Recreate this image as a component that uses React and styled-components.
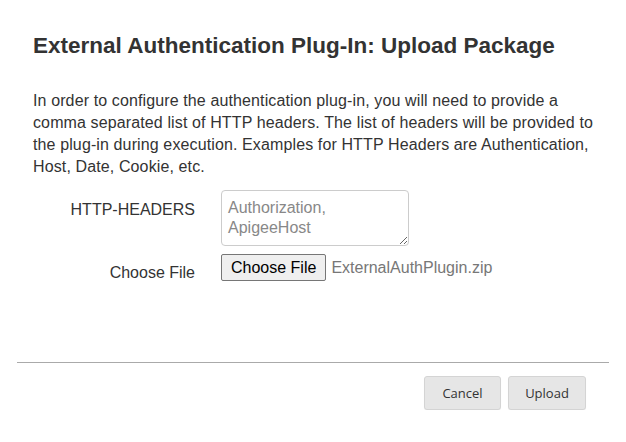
import React from "react";
import styled, { createGlobalStyle } from "styled-components";

const GlobalStyle = createGlobalStyle`
  body {
    margin: 0;
    background: #fff;
    font-family: "Liberation Sans", Arial, sans-serif;
    color: #333;
  }
`;

export default function App() {
  return (
    <>
      <GlobalStyle />
      <Modal>
        <Header>
          <Title>External Authentication Plug-In: Upload Package</Title>
        </Header>
        <Body>
          <Intro>
            In order to configure the authentication plug-in, you will need to
            provide a comma separated list of HTTP headers. The list of headers
            will be provided to the plug-in during execution. Examples for HTTP
            Headers are Authentication, Host, Date, Cookie, etc.
          </Intro>
          <Form>
            <Label htmlFor="headers">HTTP-HEADERS</Label>
            <TextArea id="headers" placeholder={"Authorization,\nApigeeHost"} />
            <Label $file>Choose File</Label>
            <FileField>
              <FileButton type="button">Choose File</FileButton>
              <FileName>ExternalAuthPlugin.zip</FileName>
            </FileField>
          </Form>
        </Body>
        <Footer>
          <ActionButton type="button">Cancel</ActionButton>
          <ActionButton type="button" $wide>Upload</ActionButton>
        </Footer>
      </Modal>
    </>
  );
}

const Modal = styled.div`
  width: 592px;
  padding: 0 17px;
`;

const Header = styled.div`
  padding: 32px 16px 0;
`;

const Title = styled.h2`
  margin: 0;
  font-size: 22.5px;
  font-weight: bold;
  line-height: 28px;
  color: #333;
`;

const Body = styled.div`
  padding: 0 6px 0 16px;
`;

const Intro = styled.p`
  margin: 30px 0 0;
  font-size: 16px;
  letter-spacing: 0.12px;
  line-height: 22px;
  color: #333;
`;

const Form = styled.div`
  display: grid;
  grid-template-columns: 162px 188px;
  column-gap: 26px;
  row-gap: 8px;
  margin-top: 12px;
  align-items: start;
`;

const Label = styled.label`
  text-align: right;
  font-size: 16px;
  color: #333;
  padding-top: ${(p) => (p.$file ? "10px" : "11px")};
`;

const TextArea = styled.textarea`
  box-sizing: border-box;
  width: 188px;
  height: 56px;
  padding: 7px 6px 4px;
  border: 1px solid #ccc;
  border-radius: 4px;
  font-family: "Liberation Sans", Arial, sans-serif;
  font-size: 16px;
  line-height: 20px;
  color: #333;
  resize: vertical;
  &::placeholder {
    color: #888;
  }
`;

const FileField = styled.div`
  display: flex;
  align-items: center;
  gap: 5px;
  white-space: nowrap;
`;

const FileButton = styled.button`
  box-sizing: border-box;
  height: 27px;
  padding: 0 9px;
  background: #efefef;
  border: 1px solid #767676;
  border-radius: 2px;
  font-family: "Liberation Sans", Arial, sans-serif;
  font-size: 16px;
  color: #000;
`;

const FileName = styled.span`
  font-size: 16px;
  color: #777;
`;

const Footer = styled.div`
  display: flex;
  justify-content: flex-end;
  gap: 7px;
  margin-top: 80px;
  padding: 13px 23px 0 0;
  border-top: 1px solid #aaa;
`;

const ActionButton = styled.button`
  box-sizing: border-box;
  width: ${(p) => (p.$wide ? "78px" : "77px")};
  height: 34px;
  background: #e6e6e6;
  border: 1px solid #d4d4d4;
  border-radius: 3px;
  font-family: "Open Sans", "Noto Sans", sans-serif;
  font-size: 13px;
  color: #333;
  box-shadow: 0 1px 1px rgba(0, 0, 0, 0.05);
`;
